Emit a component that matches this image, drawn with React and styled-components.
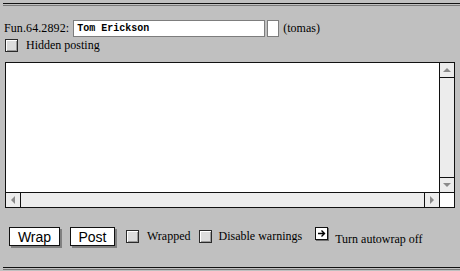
import React from 'react';
import styled, { createGlobalStyle } from 'styled-components';

const GlobalStyle = createGlobalStyle`
  html, body {
    margin: 0;
    padding: 0;
    background: #c0c0c0;
  }
  body {
    font-family: "Liberation Serif", "Times New Roman", serif;
    font-size: 12px;
    color: #000;
  }
`;

const Page = styled.div`
  width: 460px;
  height: 271px;
  overflow: hidden;
  background: #c0c0c0;
  display: flex;
  flex-direction: column;
`;

const Rule = styled.div`
  height: 1px;
  margin: ${(props) => props.margin};
  border-top: 1px solid #111;
  border-bottom: 1px solid #7a7a7a;
`;

const HeaderRow = styled.div`
  display: flex;
  align-items: center;
  padding-left: 4px;
  margin-top: 14px;
  height: 17px;
`;

const Label = styled.span`
  margin-right: 4px;
  letter-spacing: 0.1px;
  white-space: nowrap;
`;

const TextField = styled.div`
  box-sizing: border-box;
  width: ${(props) => props.width}px;
  height: 17px;
  background: #fff;
  border: 1px solid #7d7d7d;
  margin-right: 2px;
  padding: 1px 3px 0;
  font-family: "Liberation Mono", "Courier New", monospace;
  font-weight: bold;
  font-size: 10px;
  line-height: 14px;
`;

const Note = styled.span`
  margin-left: 2px;
`;

const CheckRow = styled.label`
  display: flex;
  align-items: center;
  padding-left: 5px;
  height: 14px;
  margin-top: 1px;
`;

const Box = styled.span`
  box-sizing: border-box;
  display: inline-block;
  width: 13px;
  height: 13px;
  background: #dcdcdc;
  border: 1px solid #2a2a2a;
  box-shadow: inset 1px 1px 0 #fff, inset -1px -1px 0 #9a9a9a;
  margin-right: ${(props) => props.gap}px;
  flex-shrink: 0;
`;

const Editor = styled.div`
  box-sizing: border-box;
  margin: 10px 5px 0 5px;
  height: 146px;
  border: 1px solid #111;
  display: grid;
  grid-template-columns: 1fr 15px;
  grid-template-rows: 1fr 15px;
  background: #fff;
`;

const TextArea = styled.div`
  background: #fff;
`;

const VScroll = styled.div`
  border-left: 1px solid #111;
  background: #ececec;
  display: flex;
  flex-direction: column;
  justify-content: space-between;
`;

const HScroll = styled.div`
  border-top: 1px solid #111;
  background: #ececec;
  display: flex;
  justify-content: space-between;
`;

const Corner = styled.div`
  border-top: 1px solid #111;
  border-left: 1px solid #111;
  background: #fff;
`;

const ArrowButton = styled.div`
  box-sizing: border-box;
  width: ${(props) => (props.horizontal ? '15px' : '100%')};
  height: ${(props) => (props.horizontal ? '100%' : '15px')};
  display: flex;
  align-items: center;
  justify-content: center;
  ${(props) => props.side === 'top' && 'border-bottom: 1px solid #111;'}
  ${(props) => props.side === 'bottom' && 'border-top: 1px solid #111;'}
  ${(props) => props.side === 'left' && 'border-right: 1px solid #111;'}
  ${(props) => props.side === 'right' && 'border-left: 1px solid #111;'}
`;

const Triangle = ({ dir }) => {
  const points = {
    up: '1,6 5,2 9,6',
    down: '1,2 5,6 9,2',
    left: '6,1 2,5 6,9',
    right: '2,1 6,5 2,9',
  };
  const w = dir === 'up' || dir === 'down' ? 10 : 8;
  const h = dir === 'up' || dir === 'down' ? 8 : 10;
  return (
    <svg width={w} height={h} viewBox={`0 0 ${w} ${h}`}>
      <polygon points={points[dir]} fill="#8a8a8a" />
    </svg>
  );
};

const Toolbar = styled.div`
  display: flex;
  align-items: center;
  padding-left: 9px;
  margin-top: 18px;
  height: 21px;
`;

const Button = styled.button`
  box-sizing: border-box;
  height: 19px;
  width: ${(props) => props.width}px;
  padding: 0;
  margin-right: ${(props) => props.gap}px;
  background: #fff;
  border: 1px solid #111;
  box-shadow: 2px 2px 0 #808080;
  font-family: "Liberation Sans", Arial, sans-serif;
  font-size: 14px;
  line-height: 16px;
  color: #000;
`;

const Option = styled.span`
  display: flex;
  align-items: center;
  margin-right: ${(props) => props.gap}px;
  white-space: nowrap;
`;

const ArrowIcon = styled.span`
  box-sizing: border-box;
  width: 13px;
  height: 13px;
  background: #fff;
  border: 1px solid #111;
  box-shadow: 1px 1px 0 #707070;
  display: flex;
  align-items: center;
  justify-content: center;
  margin-right: 7px;
  margin-top: -6px;
  flex-shrink: 0;
`;

const LowText = styled.span`
  margin-top: 6px;
`;

export default function App() {
  return (
    <Page>
      <GlobalStyle />
      <Rule margin="3px 0 0 3px" />
      <HeaderRow>
        <Label>Fun.64.2892:</Label>
        <TextField width={192}>Tom Erickson</TextField>
        <TextField width={12} />
        <Note>(tomas)</Note>
      </HeaderRow>
      <CheckRow>
        <Box gap={8} />
        Hidden posting
      </CheckRow>
      <Editor>
        <TextArea />
        <VScroll>
          <ArrowButton side="top">
            <Triangle dir="up" />
          </ArrowButton>
          <ArrowButton side="bottom">
            <Triangle dir="down" />
          </ArrowButton>
        </VScroll>
        <HScroll>
          <ArrowButton horizontal side="left">
            <Triangle dir="left" />
          </ArrowButton>
          <ArrowButton horizontal side="right">
            <Triangle dir="right" />
          </ArrowButton>
        </HScroll>
        <Corner />
      </Editor>
      <Toolbar>
        <Button width={51} gap={10}>Wrap</Button>
        <Button width={45} gap={11}>Post</Button>
        <Option gap={8}>
          <Box gap={8} />
          Wrapped
        </Option>
        <Option gap={13}>
          <Box gap={7} />
          Disable warnings
        </Option>
        <Option gap={0}>
          <ArrowIcon>
            <svg width="9" height="9" viewBox="0 0 9 9">
              <path d="M1 4.5 H7 M4.5 1.5 L7.5 4.5 L4.5 7.5" stroke="#000" strokeWidth="1.4" fill="none" />
            </svg>
          </ArrowIcon>
          <LowText>Turn autowrap off</LowText>
        </Option>
      </Toolbar>
      <Rule margin="auto 0 1px 3px" />
    </Page>
  );
}
